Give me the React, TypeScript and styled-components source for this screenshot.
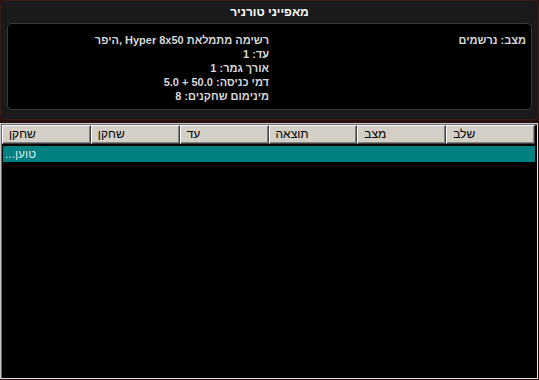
import styled, { createGlobalStyle } from 'styled-components';

const Global = createGlobalStyle`
  html, body {
    margin: 0;
    padding: 0;
    background: #2a0f0f;
  }
  #root {
    width: 539px;
    height: 380px;
  }
`;

const Page = styled.div`
  width: 539px;
  height: 380px;
  display: flex;
  flex-direction: column;
  background: #2a0f0f;
  font-family: "Liberation Sans", "DejaVu Sans", sans-serif;
`;

const InfoPanel = styled.section`
  height: 120px;
  box-sizing: border-box;
  background: #1a1a1a;
  border: 1px solid #3a1a1a;
  border-radius: 6px;
  display: flex;
  flex-direction: column;
  padding: 0 6px 9px 6px;
`;

const Title = styled.h1`
  margin: 0;
  height: 22px;
  line-height: 22px;
  text-align: center;
  font-size: 12px;
  font-weight: bold;
  color: #ffffff;
  direction: rtl;
`;

const InfoBox = styled.div`
  flex: 1;
  background: #000;
  border: 1px solid #3a3a3a;
  border-radius: 5px;
  direction: rtl;
  display: grid;
  grid-template-columns: 257px 1fr;
  padding: 9px 5px 0 5px;
`;

const InfoColumn = styled.div`
  display: flex;
  flex-direction: column;
`;

const InfoLine = styled.div`
  font-size: 11px;
  font-weight: bold;
  line-height: 14px;
  color: #d8d8d8;
  white-space: nowrap;
`;

const TableFrame = styled.section`
  flex: 1;
  margin-top: 3px;
  box-sizing: border-box;
  background: #000;
  border: 1px solid #c8c8c8;
  border-right-color: #e0e0e0;
  border-bottom-color: #e0e0e0;
  box-shadow: inset 1px 1px 0 #6a6a6a;
  padding: 1px 2px 0 1px;
  display: flex;
  flex-direction: column;
  margin-bottom: 1px;
  margin-right: 1px;
`;

const HeaderRow = styled.div`
  display: grid;
  grid-template-columns: repeat(6, 1fr);
  height: 19px;
`;

const HeaderCell = styled.div`
  box-sizing: border-box;
  background: #d4d0c8;
  border: 1px solid;
  border-color: #ffffff #404040 #404040 #ffffff;
  box-shadow: inset -1px -1px 0 #808080;
  font-size: 12px;
  line-height: 17px;
  color: #000;
  padding-left: 6px;
  text-align: left;
  white-space: nowrap;
`;

const Row = styled.div`
  margin-top: 2px;
  margin-left: 1px;
  height: 16px;
  background: #008080;
  color: #d8e8e8;
  font-size: 12px;
  line-height: 16px;
  padding-left: 2px;
  direction: rtl;
  text-align: left;
`;

const infoLeft = [
  'רשימה מתמלאת Hyper 8x50 ,היפר',
  'עד: 1',
  'אורך גמר: 1',
  'דמי כניסה: 50.0 + 5.0',
  'מינימום שחקנים: 8',
];

const columns = ['שחקן', 'שחקן', 'עד', 'תוצאה', 'מצב', 'שלב'];

export default function App() {
  return (
    <Page>
      <Global />
      <InfoPanel>
        <Title>מאפייני טורניר</Title>
        <InfoBox>
          <InfoColumn>
            <InfoLine>מצב: נרשמים</InfoLine>
          </InfoColumn>
          <InfoColumn>
            {infoLeft.map((t, i) => (
              <InfoLine key={i}>{t}</InfoLine>
            ))}
          </InfoColumn>
        </InfoBox>
      </InfoPanel>
      <TableFrame>
        <HeaderRow>
          {columns.map((c, i) => (
            <HeaderCell key={i}>{c}</HeaderCell>
          ))}
        </HeaderRow>
        <Row>טוען...</Row>
      </TableFrame>
    </Page>
  );
}
